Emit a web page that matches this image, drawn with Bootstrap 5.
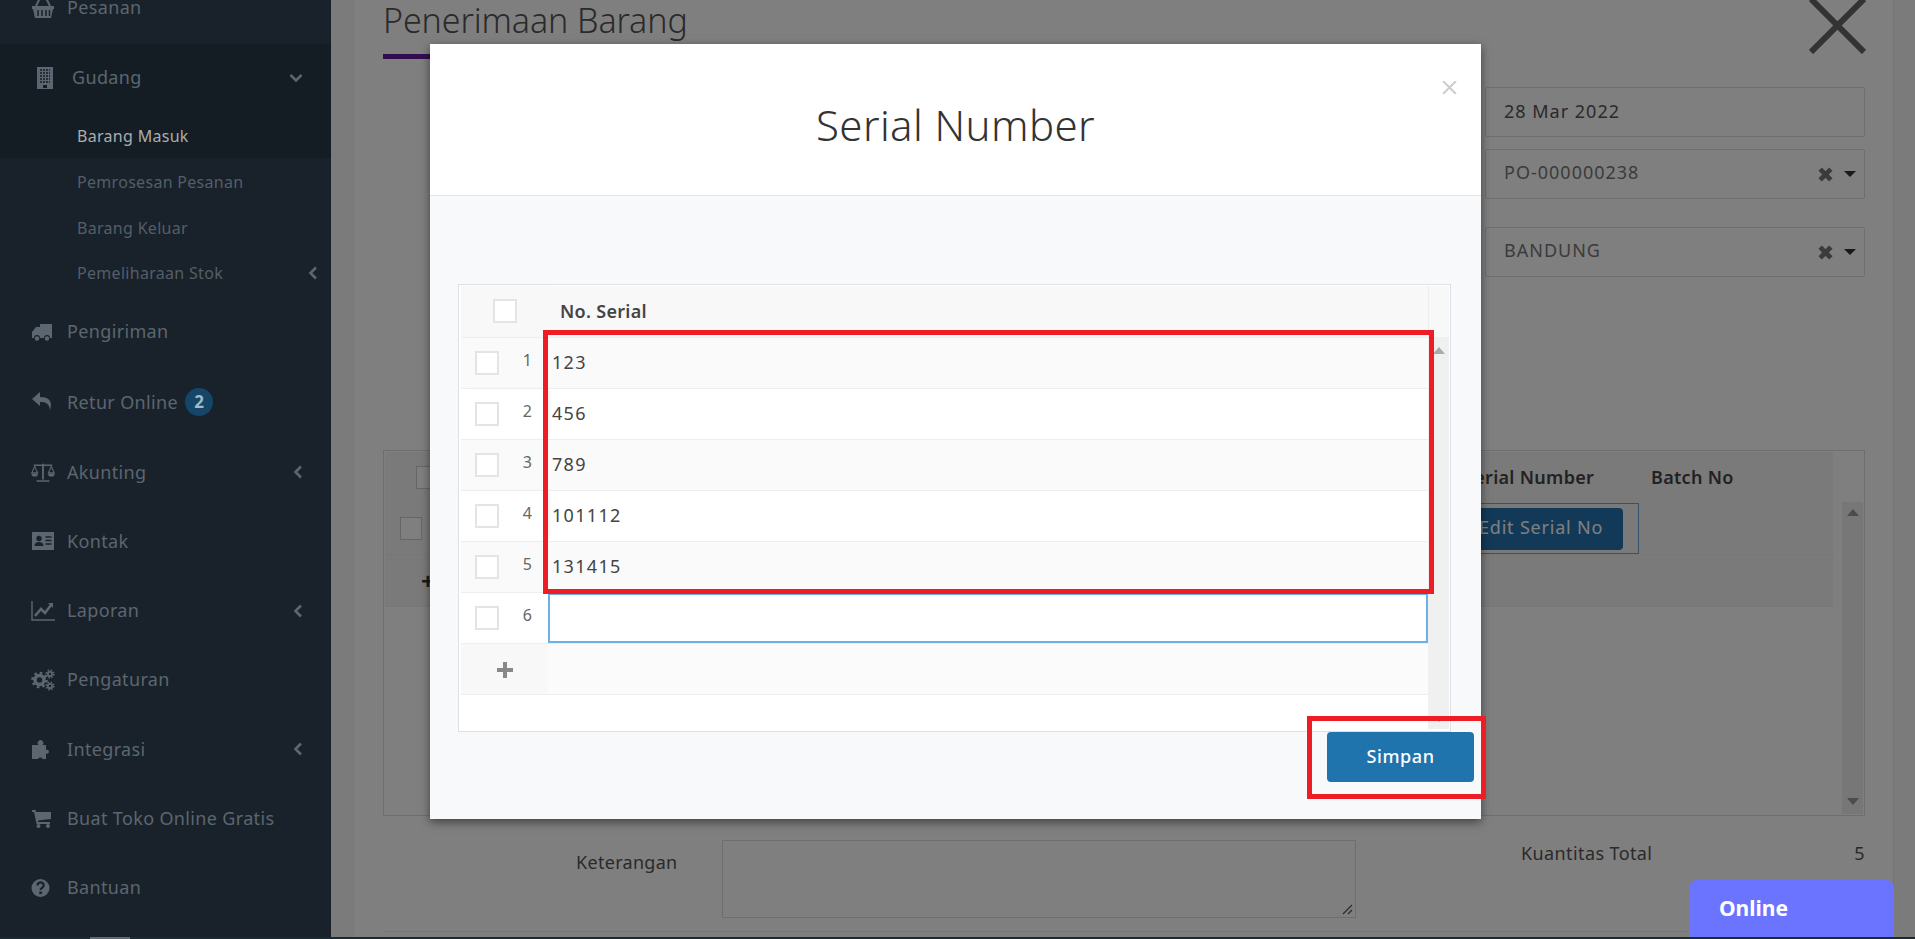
<!DOCTYPE html>
<html lang="id">
<head>
<meta charset="utf-8">
<title>Penerimaan Barang</title>
<link href="https://cdn.jsdelivr.net/npm/bootstrap@5.3.0/dist/css/bootstrap.min.css" rel="stylesheet">
<style>
html,body{height:939px;overflow:hidden}
body{font-family:"Noto Sans","Lato",sans-serif;font-size:18px;color:#555;background:#fff}
.app-shell{height:937px;overflow:hidden}
.bottom-strip{height:2px;background:#1b2b31;position:relative;z-index:1060}
.bottom-strip i{display:block;margin-left:90px;width:40px;height:2px;background:#5f6a70}
.side-panel{width:331px;flex:none;background:#19222a;position:relative;z-index:1051;color:#5c6670;overflow:hidden}
.side-list{margin-top:-27px;list-style:none;padding:0}
.side-item{height:69.25px;display:flex;align-items:center;padding-left:31px;padding-right:28px;letter-spacing:.35px}
.side-item.item-tall{height:71px}
.side-item svg.ico{width:24px;height:22px;flex:none;margin-right:12px;fill:#5c6670}
.side-open{background:#151d24;margin-top:1.5px}
.side-open>.side-item{height:68px;padding-left:36px}
.side-open>.side-item svg.ico{width:18px;margin-right:18px}
.sub-list{list-style:none;padding:0;margin:0 0 3px;font-size:16px}
.sub-item{height:45.5px;display:flex;align-items:center;padding:3px 13px 0 77px;background:#19222a;color:#545e68;letter-spacing:.3px}
.sub-item.sub-active{background:#151d24;color:#a9adb0;height:46px}
.chev{width:10px;height:14px;flex:none;fill:none;stroke:#5c6670;stroke-width:2.6;margin-left:auto}
.count-dot{width:28px;height:28px;border-radius:50%;background:#154569;color:#a5b8c6;font-size:17px;font-weight:700;margin-left:7px;letter-spacing:0}
.page-pane{flex:1;background:#f6f6f6;padding-left:22px;padding-right:21px;min-width:0}
.page-card{height:937px;background:#fff;border-left:1px solid #f0f0f0;border-right:1px solid #eaeaea;padding:0 28px 0 29px}
.page-head{height:54px}
.page-title{font-size:34px;font-weight:300;color:#555;margin:0;line-height:40px;letter-spacing:-.1px}
.big-x{width:57px;height:54px;stroke:#666;stroke-width:6;margin-right:-1px}
.title-rule{width:110px;height:5px;background:#601ca0}
.field-col{width:380px;margin-top:28px;margin-left:auto}
.fld{height:50px;border:1px solid #ddd;border-radius:2px;padding:0 8px 0 18px;color:#555;display:flex;align-items:center;letter-spacing:1px}
.fld span{margin-bottom:4px;color:#777}
.fld-date span{margin:0 0 2px;color:#555}
.fld-x{width:15px;height:15px;margin-left:auto;stroke:#777;stroke-width:4.5}
.fld-caret{width:0;height:0;border:6px solid transparent;border-top:6px solid #333;border-bottom:0;margin-left:11px}
.under-grid{height:366px;margin-top:173px;border:1px solid #ddd;padding:1px;display:flex}
.under-table{flex:1;min-width:0;margin-right:9px;align-self:flex-start}
.under-row{display:grid;grid-template-columns:1fr 181px 194px;background:#f5f5f5;border-bottom:1px solid #eee;height:52px}
.under-row>div{display:flex;align-items:center;min-width:0}
.under-head{font-weight:600;color:#444;letter-spacing:.3px}
.under-scroll{width:21px;background:#eee;height:calc(100% - 50px);margin-top:50px;display:flex;flex-direction:column;justify-content:space-between;align-items:center;padding:7px 0 9px}
.tick{width:22px;height:23px;border:1px solid #ccc;display:block;background:#fff;flex:none}
.edit-cell{border:1px solid #6aa7de;padding-left:5px}
.edit-btn{background:#2574b0;color:#fff;border-radius:4px;height:42px;width:159px;border:0;font-size:18px;padding:0 0 2px 15px;text-align:left;white-space:nowrap;letter-spacing:.8px}
.bottom-row{margin-top:24px;height:78px}
.note-label{width:339px;padding-left:193px;margin-top:9px;color:#555;flex:none;letter-spacing:.3px}
.note-area{width:634px;height:78px;border:1px solid #ddd;flex:none;position:relative}
.note-grip{position:absolute;right:2px;bottom:2px;width:11px;height:11px;stroke:#555;stroke-width:1.200}
.note-spacer{width:165px;flex:none}
.note-total{flex:1;margin-top:0;color:#555;letter-spacing:.4px}
.page-rule{margin-top:13px;border-top:1px solid #eee}
.online-tab{position:fixed;left:1689px;bottom:2px;width:205px;height:57px;background:#6a74ff;color:#fff;font-weight:700;font-size:21px;border-radius:8px 8px 0 0;z-index:1060;padding-left:30px}
.sn-dialog.modal-dialog{max-width:1051px;width:1051px;margin:44px 0 0 430px}
.sn-content.modal-content{border:0;border-radius:0;height:775px;background:#f8f9fb;box-shadow:0 3px 9px rgba(0,0,0,.5)}
.sn-header{height:152px;background:#fff;border-bottom:1px solid #e5e5e5;position:relative}
.sn-title{font-size:42px;font-weight:300;color:#333;margin:0;padding-top:11px;letter-spacing:.4px}
.sn-close{position:absolute;left:1012px;top:37px;width:15px;height:13px;stroke:#ccc;stroke-width:2}
.sn-body{padding:88px 30px 0 28px}
.sn-grid{height:448px;border:1px solid #dee2e6;background:#fff;padding:1px 1px 1px 2px;display:flex}
.sn-table-wrap{flex:1;min-width:0}
.sn-grid table.table{margin:0;table-layout:fixed;--bs-table-bg:transparent;border-color:#eee;font-size:18px;color:#444;width:967px}
.sn-grid th,.sn-grid td{padding:0;vertical-align:middle;height:51px;border-bottom:1px solid #eee}
.sn-grid thead th{background:#f8f8f8;font-weight:600;color:#444;font-size:18px;letter-spacing:.3px}
.sn-grid .head-col{width:87px;box-shadow:3px 0 4px -2px rgba(0,0,0,.08)}
.sn-grid tbody td.val{padding-left:4px;letter-spacing:1.3px}
.sn-grid tr.stripe>*{background:#fafafa}
.sn-grid td.cell-active{box-shadow:inset 0 0 0 2px #6cb0e8}
.sn-grid tr.add-row>*{background:#fbfbfb}
.sn-grid tr.add-row>.head-col{background:#f8f8f8}
.head-wrap{display:flex;align-items:center;justify-content:space-between;padding:0 16px 0 14px}
.head-num{font-size:16px;color:#666;font-weight:400;margin-bottom:6px}
.tick-sn{width:24px;height:24px;border:2px solid #e4e4e4;background:#fff;display:block}
.sn-strip{width:21px;flex:none;display:flex;flex-direction:column}
.sn-strip-top{height:51px;background:#f8f8f8;border-left:1px solid #eee}
.sn-strip-bar{height:392px;background:#f0f0f0;display:flex;flex-direction:column;justify-content:space-between;align-items:center;padding:10px 0 7px}
.sn-foot{display:flex;justify-content:flex-end;margin-right:-23px}
.sn-save{width:147px;height:50px;background:#2074ae;color:#fff;font-size:18px;font-weight:500;border:0;border-radius:4px;padding-bottom:3px;letter-spacing:.6px}
.anno{position:absolute;border:5px solid #ee1c25;pointer-events:none}
.anno-rows{left:113px;top:286px;width:891px;height:264px}
.anno-save{left:877px;top:672px;width:179px;height:83px}
</style>
</head>
<body>
<div class="app-shell d-flex">
  <aside class="side-panel">
    <ul class="side-list">
      <li class="side-item"><svg class="ico" viewBox="0 0 24 22"><path d="M1 9h22v3h-1l-2 9H4L2 12H1z"/><path d="M5 9 9 1M19 9 15 1M9 1h6" stroke="#5c6670" stroke-width="2" fill="none"/><path d="M7 13v6M11 13v6M15 13v6M18.500 13v6" stroke="#19222a" stroke-width="1.500"/></svg>Pesanan</li>
      <li class="side-open">
        <div class="side-item"><svg class="ico" viewBox="0 0 18 22"><path d="M1 0h16v22H1z"/><path d="M4 3h10M4 6h10M4 9h10M4 12h10M4 15h10" stroke="#151d24" stroke-width="1.500" stroke-dasharray="2 1"/><path d="M7 18h4v3H7z" fill="#151d24"/></svg>Gudang<svg class="chev" viewBox="0 0 14 10" style="width:14px;height:10px;margin-right:0"><path d="M1.500 2 7 7.500 12.500 2"/></svg></div>
        <ul class="sub-list">
          <li class="sub-item sub-active">Barang Masuk</li>
          <li class="sub-item">Pemrosesan Pesanan</li>
          <li class="sub-item">Barang Keluar</li>
          <li class="sub-item">Pemeliharaan Stok<svg class="chev" viewBox="0 0 10 14"><path d="M8 1.500 2.500 7 8 12.500"/></svg></li>
        </ul>
      </li>
      <li class="side-item"><svg class="ico" viewBox="0 0 24 22"><path d="M9 3h12v14h-2a3 3 0 0 0-6 0H9a3 3 0 0 0-6 0H1v-6l4-5h4z"/><circle cx="6" cy="17.500" r="2.200"/><circle cx="16" cy="17.500" r="2.200"/></svg>Pengiriman</li>
      <li class="side-item item-tall"><svg class="ico" viewBox="0 0 24 22"><path d="M9 1 1 8l8 7v-4c6 0 9 1 10 8 3-9-1-13-10-13z"/></svg>Retur Online<span class="count-dot d-flex align-items-center justify-content-center">2</span></li>
      <li class="side-item"><svg class="ico" viewBox="0 0 26 22"><path d="M12 2h2v17h-2zM6 20h14v1.500H6zM3 3h20v1.500H3z"/><path d="M4 5 .8 12h6.400zM22 5l-3.200 7h6.400z" fill="none" stroke="#5c6670" stroke-width="1.200"/><path d="M.5 12.500h7a3.500 3.500 0 0 1-7 0zM18.500 12.500h7a3.500 3.500 0 0 1-7 0z"/></svg>Akunting<svg class="chev" viewBox="0 0 10 14" style="margin-right:0"><path d="M8 1.500 2.500 7 8 12.500"/></svg></li>
      <li class="side-item"><svg class="ico" viewBox="0 0 24 22"><path d="M1 2h22v18H1z"/><circle cx="8" cy="8.500" r="2.700" fill="#19222a"/><path d="M3.500 16c0-3 2-4 4.500-4s4.500 1 4.500 4z" fill="#19222a"/><path d="M14.500 7h6M14.500 10.500h6M14.500 14h6" stroke="#19222a" stroke-width="1.500"/></svg>Kontak</li>
      <li class="side-item"><svg class="ico" viewBox="0 0 24 22"><path d="M1 1v19h23" fill="none" stroke="#5c6670" stroke-width="1.400"/><path d="M4 16 10 9l4 4 6-8" fill="none" stroke="#5c6670" stroke-width="2.600"/><path d="M17 3h5v5z"/></svg>Laporan<svg class="chev" viewBox="0 0 10 14" style="margin-right:0"><path d="M8 1.500 2.500 7 8 12.500"/></svg></li>
      <li class="side-item"><svg class="ico" viewBox="0 0 24 22"><circle cx="8.500" cy="11" r="4.500" fill="none" stroke="#5c6670" stroke-width="3.500"/><circle cx="8.500" cy="11" r="7" fill="none" stroke="#5c6670" stroke-width="2.600" stroke-dasharray="2.600 2.900"/><circle cx="19" cy="5" r="2.200" fill="none" stroke="#5c6670" stroke-width="1.800"/><circle cx="19" cy="5" r="3.800" fill="none" stroke="#5c6670" stroke-width="1.600" stroke-dasharray="1.500 1.500"/><circle cx="19" cy="17" r="2.200" fill="none" stroke="#5c6670" stroke-width="1.800"/><circle cx="19" cy="17" r="3.800" fill="none" stroke="#5c6670" stroke-width="1.600" stroke-dasharray="1.500 1.500"/></svg>Pengaturan</li>
      <li class="side-item"><svg class="ico" viewBox="0 0 24 22"><path d="M1 7h6.500a2.800 2.800 0 1 1 4 0H15v5a2 2 0 1 1 0 3.500V21h-3.500a2.500 2.500 0 0 0-4.500 0H1z"/></svg>Integrasi<svg class="chev" viewBox="0 0 10 14" style="margin-right:0"><path d="M8 1.500 2.500 7 8 12.500"/></svg></li>
      <li class="side-item"><svg class="ico" viewBox="0 0 24 22"><path d="M1 3h3.500l.6 2H20v7l-13 1.600.3 1.400H19v2H5.600L3 5H1z"/><circle cx="7.500" cy="19" r="2"/><circle cx="17" cy="19" r="2"/></svg>Buat Toko Online Gratis</li>
      <li class="side-item"><svg class="ico" viewBox="0 0 24 22"><circle cx="9.500" cy="11" r="9"/><path d="M6.500 8.500c0-4 6.200-4 6.200-.2 0 2.500-3.100 2.400-3.100 4.700" fill="none" stroke="#19222a" stroke-width="2.200"/><path d="M8.300 14.500h2.600v2.600H8.300z" fill="#19222a"/></svg>Bantuan</li>
    </ul>
  </aside>
  <main class="page-pane">
    <div class="page-card">
      <div class="page-head d-flex justify-content-between align-items-start">
        <h2 class="page-title">Penerimaan Barang</h2>
        <svg class="big-x" viewBox="0 0 57 54"><path d="M2 -1 55 52M55 -1 2 52"/></svg>
      </div>
      <div class="title-rule"></div>
      <div class="field-col">
        <div class="fld fld-date"><span>28 Mar 2022</span></div>
        <div class="fld" style="margin-top:12px"><span>PO-000000238</span><svg class="fld-x" viewBox="0 0 14 14"><path d="M2 2l10 10M12 2 2 12"/></svg><i class="fld-caret"></i></div>
        <div class="fld" style="margin-top:28px"><span>BANDUNG</span><svg class="fld-x" viewBox="0 0 14 14"><path d="M2 2l10 10M12 2 2 12"/></svg><i class="fld-caret"></i></div>
      </div>
      <div class="under-grid">
        <div class="under-table">
          <div class="under-row under-head" style="height:51px;border-bottom:0">
            <div style="padding-left:31px"><span class="tick"></span></div>
            <div style="padding-left:6px;white-space:nowrap">Serial Number</div>
            <div style="padding-left:12px">Batch No</div>
          </div>
          <div class="under-row">
            <div style="padding-left:15px"><span class="tick"></span></div>
            <div class="edit-cell"><button type="button" class="edit-btn">Edit Serial No</button></div>
            <div></div>
          </div>
          <div class="under-row">
            <div style="padding-left:36px;color:#333;font-weight:700;font-size:24px">+</div>
            <div></div>
            <div></div>
          </div>
        </div>
        <div class="under-scroll">
          <svg width="12" height="7" viewBox="0 0 12 7"><path d="M6 0l6 7H0z" fill="#999"/></svg>
          <svg width="12" height="7" viewBox="0 0 12 7"><path d="M6 7l6-7H0z" fill="#999"/></svg>
        </div>
      </div>
      <div class="bottom-row d-flex">
        <div class="note-label">Keterangan</div>
        <div class="note-area"><svg class="note-grip" viewBox="0 0 11 11"><path d="M1 10 10 1M6 10l4-4"/></svg></div>
        <div class="note-spacer"></div>
        <div class="note-total d-flex justify-content-between"><span>Kuantitas Total</span><span>5</span></div>
      </div>
      <div class="page-rule"></div>
    </div>
  </main>
</div>
<div class="bottom-strip"><i></i></div>
<div class="online-tab d-flex align-items-center">Online</div>

<div class="modal-backdrop fade show"></div>
<div class="modal fade show d-block" tabindex="-1" aria-modal="true" role="dialog">
  <div class="modal-dialog sn-dialog">
    <div class="modal-content sn-content">
      <div class="sn-header d-flex align-items-center justify-content-center">
        <h3 class="sn-title">Serial Number</h3>
        <svg class="sn-close" viewBox="0 0 15 13"><path d="M1 0l13 13M14 0 1 13"/></svg>
      </div>
      <div class="sn-body">
        <div class="sn-grid">
          <div class="sn-table-wrap">
            <table class="table mb-0">
              <thead>
                <tr><th class="head-col"><span class="tick-sn mx-auto"></span></th><th style="padding-left:12px">No. Serial</th></tr>
              </thead>
              <tbody>
                <tr class="stripe"><td class="head-col"><div class="head-wrap"><span class="tick-sn"></span><span class="head-num">1</span></div></td><td class="val">123</td></tr>
                <tr><td class="head-col"><div class="head-wrap"><span class="tick-sn"></span><span class="head-num">2</span></div></td><td class="val">456</td></tr>
                <tr class="stripe"><td class="head-col"><div class="head-wrap"><span class="tick-sn"></span><span class="head-num">3</span></div></td><td class="val">789</td></tr>
                <tr><td class="head-col"><div class="head-wrap"><span class="tick-sn"></span><span class="head-num">4</span></div></td><td class="val">101112</td></tr>
                <tr class="stripe"><td class="head-col"><div class="head-wrap"><span class="tick-sn"></span><span class="head-num">5</span></div></td><td class="val">131415</td></tr>
                <tr><td class="head-col"><div class="head-wrap"><span class="tick-sn"></span><span class="head-num">6</span></div></td><td class="val cell-active"></td></tr>
                <tr class="add-row"><td class="head-col text-center"><svg width="16" height="16" viewBox="0 0 16 16"><path d="M6 0h4v6h6v4h-6v6H6v-6H0V6h6z" fill="#888"/></svg></td><td></td></tr>
              </tbody>
            </table>
          </div>
          <div class="sn-strip">
            <div class="sn-strip-top"></div>
            <div class="sn-strip-bar">
              <svg width="12" height="7" viewBox="0 0 12 7"><path d="M6 0l6 7H0z" fill="#aaa"/></svg>
              <svg width="4" height="2" viewBox="0 0 4 2"><path d="M0 0h4L2 2z" fill="#aaa"/></svg>
            </div>
          </div>
        </div>
        <div class="sn-foot"><button type="button" class="sn-save">Simpan</button></div>
      </div>
      <div class="anno anno-rows"></div>
      <div class="anno anno-save"></div>
    </div>
  </div>
</div>
<script src="https://cdn.jsdelivr.net/npm/bootstrap@5.3.0/dist/js/bootstrap.bundle.min.js"></script>
</body>
</html>
